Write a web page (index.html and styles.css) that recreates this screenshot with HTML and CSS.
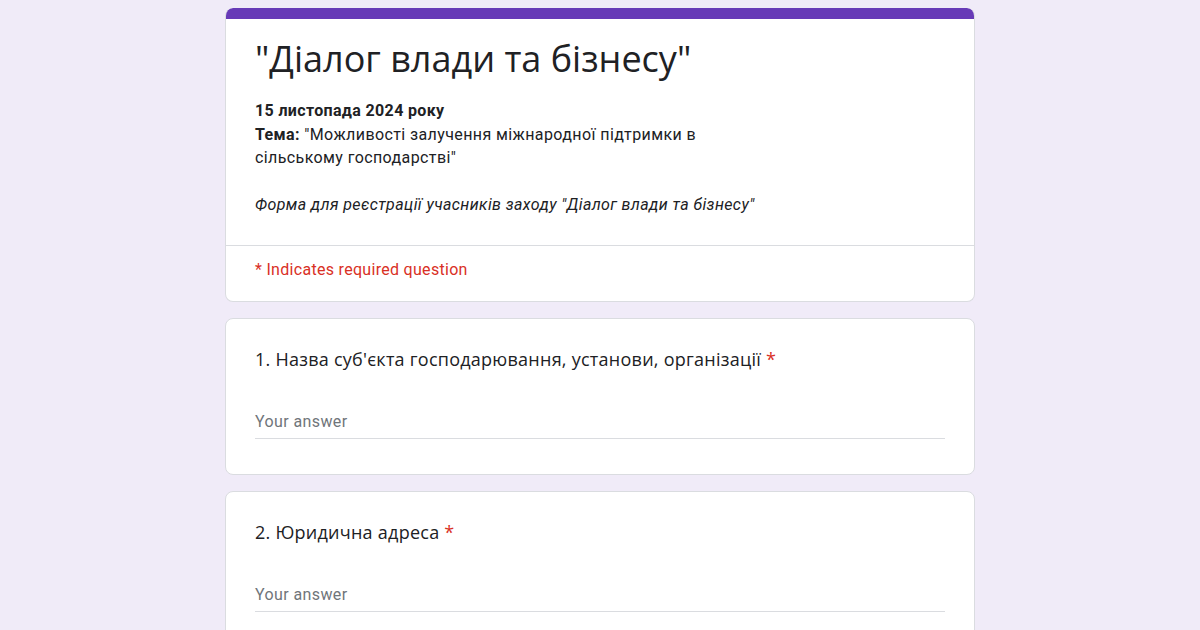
FILE: index.html
```html
<!DOCTYPE html>
<html lang="uk">
<head>
<meta charset="utf-8">
<link rel="stylesheet" href="styles.css">
</head>
<body>
<div class="page">
  <div class="card header-card">
    <div class="topbar"></div>
    <div class="header-main">
      <div class="title">"Діалог влади та бізнесу"</div>
      <div class="desc">
        <div><b>15 листопада 2024 року</b></div>
        <div><b>Тема:</b> "Можливості залучення міжнародної підтримки в<br>сільському господарстві"</div>
        <div class="blank">&nbsp;</div>
        <div><i>Форма для реєстрації учасників заходу "Діалог влади та бізнесу"</i></div>
      </div>
    </div>
    <div class="required-note">* Indicates required question</div>
  </div>

  <div class="card question">
    <div class="q-title">1. Назва суб'єкта господарювання, установи, організації <span class="star">*</span></div>
    <div class="answer"><span>Your answer</span></div>
  </div>

  <div class="card question">
    <div class="q-title">2. Юридична адреса <span class="star">*</span></div>
    <div class="answer"><span>Your answer</span></div>
  </div>
</div>
</body>
</html>
```

FILE: styles.css
```css
html, body {
  margin: 0;
  padding: 0;
}
body {
  background: #f0ebf8;
  font-family: Roboto, "Noto Sans", Arial, sans-serif;
  color: #202124;
  height: 630px;
  overflow: hidden;
}
.page {
  width: 750px;
  margin: 8px auto 0;
  display: flex;
  flex-direction: column;
  gap: 16px;
}
.card {
  background: #fff;
  border: 1px solid #dadce0;
  border-radius: 8px;
  overflow: hidden;
}
.header-card {
  border-top: none;
}
.topbar {
  height: 11px;
  background: #673ab7;
  border-radius: 8px 8px 0 0;
  margin: 0 -1px;
}
.header-main {
  padding: 18px 29px 28px;
  border-bottom: 1px solid #dadce0;
}
.title {
  font-family: "Open Sans", Roboto, sans-serif;
  font-size: 36px;
  line-height: 44px;
  color: #202124;
}
.desc {
  margin-top: 18px;
  font-size: 16px;
  line-height: 23.5px;
  letter-spacing: 0.4px;
}
.desc b {
  font-weight: 700;
  letter-spacing: 0.35px;
}
.required-note {
  padding: 14px 29px 21px;
  font-size: 16px;
  line-height: 20px;
  letter-spacing: 0.3px;
  color: #d93025;
}
.question {
  padding: 28px 29px 35px;
}
.q-title {
  font-family: "Open Sans", Roboto, sans-serif;
  font-size: 18px;
  line-height: 24px;
  letter-spacing: 0.25px;
  color: #202124;
}
.star {
  color: #d93025;
}
.answer {
  margin-top: 35px;
  height: 32px;
  border-bottom: 1px solid #dadce0;
  display: flex;
  align-items: center;
  font-size: 16px;
  letter-spacing: 0.4px;
  color: #70757a;
}
```
